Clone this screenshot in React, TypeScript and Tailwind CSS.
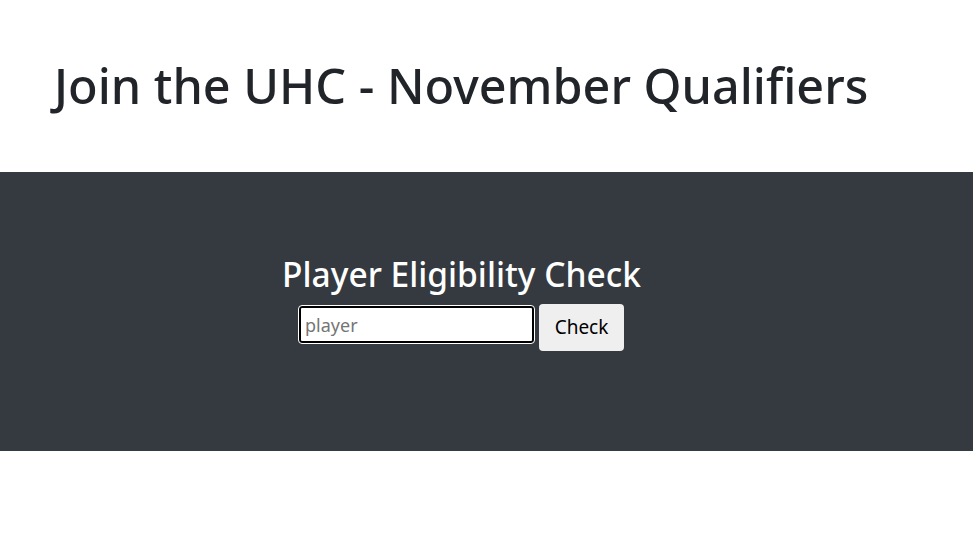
export default function App() {
  return (
    <div className="min-h-screen bg-white font-['Noto_Sans',sans-serif]">
      {/* Header */}
      <div className="px-[54px] h-[172px] flex items-center">
        <h1 className="text-[48.5px] leading-[68px] font-medium text-[#212529] -mt-[2px]">
          Join the UHC - November Qualifiers
        </h1>
      </div>

      {/* Eligibility section */}
      <div className="bg-[#343a40] h-[279px] flex flex-col items-center pt-[78px] pr-[50px]">
        <h2 className="text-[33.5px] leading-[48px] font-medium text-white">
          Player Eligibility Check
        </h2>
        <div className="flex items-start gap-[5px] mt-[6px]">
          <input
            autoFocus
            placeholder="player"
            className="mt-[2px] w-[235px] h-[37px] bg-white rounded-[3px] border-2 border-black outline outline-1 outline-white px-[4px] text-[18px] text-black placeholder:text-[#757575] focus:outline-white"
          />
          <button className="h-[47px] w-[85px] bg-[#efefef] rounded-[4px] text-[19px] text-black">
            Check
          </button>
        </div>
      </div>
    </div>
  );
}
